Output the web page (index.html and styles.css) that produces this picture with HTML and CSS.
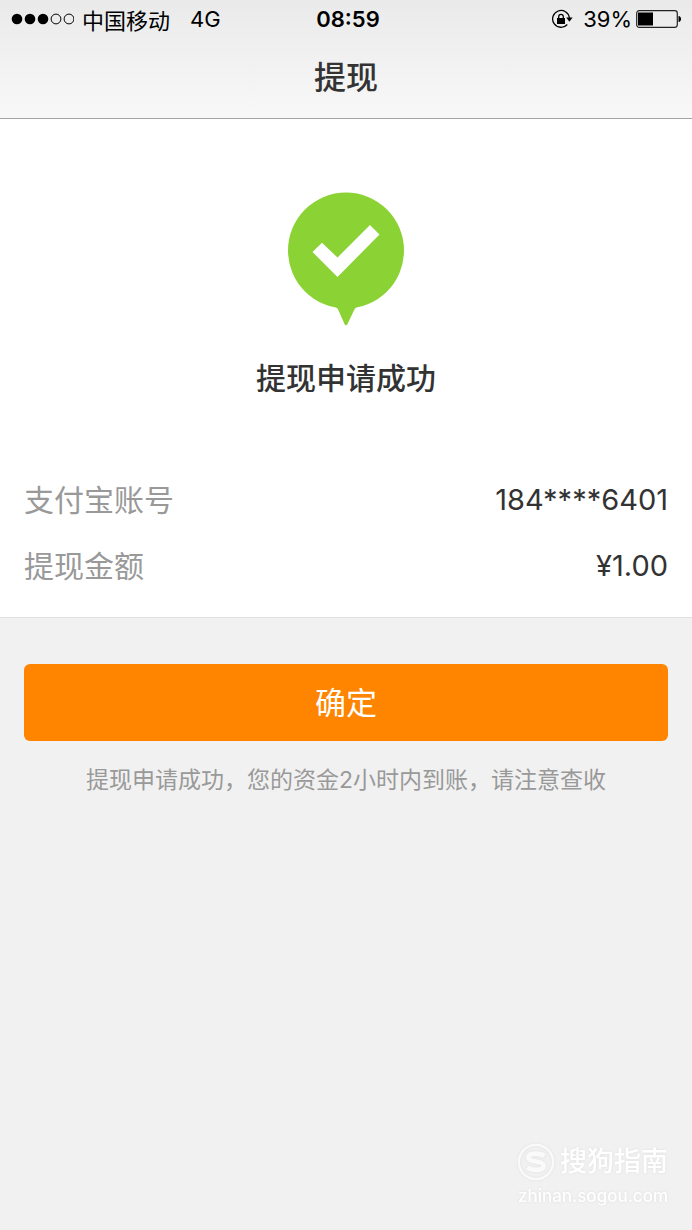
FILE: index.html
```html
<!DOCTYPE html>
<html lang="zh-CN">
<head>
  <meta charset="UTF-8" />
  <meta name="viewport" content="width=device-width, initial-scale=1" />
  <title>提现</title>
  <link rel="stylesheet" href="styles.css">
</head>
<body>
  <header>
    <div class="status-bar">
      <div class="carrier">
        <svg class="signal" width="64" height="12" viewBox="0 0 64 12">
          <circle cx="7" cy="6" r="5.300" />
          <circle cx="20" cy="6" r="5.300" />
          <circle cx="33" cy="6" r="5.300" />
          <circle class="off" cx="46" cy="6" r="4.900" />
          <circle class="off" cx="59" cy="6" r="4.900" />
        </svg>
        <span>中国移动</span>
        <span class="network">4G</span>
      </div>
      <time>08:59</time>
      <div class="battery">
        <svg width="22" height="20" viewBox="0 0 22 20">
          <path d="M16.300 15.500A8.400 8.400 0 1 1 18.400 9" fill="none" stroke="#000" stroke-width="1.300" />
          <path d="M15.200 8.400h6.400l-3.200 4.400z" />
          <path d="M6 9h8v6H6z" />
          <path d="M7.700 9.500V7.600a2.300 2.300 0 0 1 4.600 0v1.900" fill="none" stroke="#000" stroke-width="1.300" />
        </svg>
        <span>39%</span>
        <svg width="46" height="18" viewBox="0 0 46 18">
          <rect x=".7" y=".7" width="40.600" height="16.600" rx="2.500" fill="none" stroke="#222" stroke-width="1.200" />
          <path d="M2 2.500h15v13H2z" />
          <path d="M42.500 6c3.400 0 3.400 6 0 6z" />
        </svg>
      </div>
    </div>
    <h1>提现</h1>
  </header>

  <main>
    <section class="result">
      <svg class="success-icon" width="118" height="134" viewBox="0 0 118 134">
        <circle cx="59" cy="58.500" r="58" fill="#8bd234" />
        <path fill="#8bd234" d="M46 114c3 .8 4.300 2 5.200 3.800L57.500 132c.7 1.600 2.300 1.600 3 0l6.800-14.200c.9-1.800 2.200-3 5.200-3.800z" />
        <path fill="#fff" d="M25.500 60l9.500-9.300L50.500 65.500 83 33l9.500 9.500L50.500 85z" />
      </svg>
      <h2>提现申请成功</h2>
      <dl>
        <div class="row">
          <dt>支付宝账号</dt>
          <dd>184****6401</dd>
        </div>
        <div class="row">
          <dt>提现金额</dt>
          <dd>¥1.00</dd>
        </div>
      </dl>
    </section>

    <section class="actions">
      <button type="button">确定</button>
      <p>提现申请成功，您的资金2小时内到账，请注意查收</p>
    </section>
  </main>

  <footer>
    <div class="brand">
      <svg width="38" height="38" viewBox="0 0 40 40" fill="none" stroke="#fafafa">
        <circle cx="20" cy="20" r="18" stroke-width="2.500" />
        <path d="M29 13.500c-4-3-17-4-17 1.500 0 6 16 3 16 9 0 6-13 5-17 1.500" stroke-width="5" />
      </svg>
      <span>搜狗指南</span>
    </div>
    <div class="site">zhinan.sogou.com</div>
  </footer>
</body>
</html>
```

FILE: styles.css
```css
* {
  box-sizing: border-box;
  margin: 0;
  padding: 0;
}

body {
  display: flex;
  flex-direction: column;
  min-height: 100vh;
  background: #f1f1f1;
  color: #333;
  font-family: Inter, "Noto Sans CJK SC", sans-serif;
}

header {
  padding-bottom: 16px;
  background: linear-gradient(#eaeaea, #f8f8f8);
  border-bottom: 1px solid #a5a5a5;
}

.status-bar {
  display: grid;
  grid-template-columns: 1fr auto 1fr;
  align-items: center;
  height: 38px;
  padding: 0 10px;
  color: #000;
  font-size: 22px;
}

.carrier,
.battery {
  display: flex;
  align-items: center;
}

.carrier { gap: 8px }
.network { margin-left: 12px }
.off { fill: none; stroke: #000 }

time {
  padding-left: 4px;
  font-weight: 600;
}

.battery {
  justify-content: flex-end;
  gap: 4px;
}

.battery span { margin-left: 6px }

h1 {
  line-height: 48px;
  margin-top: 16px;
  font-size: 32px;
  font-weight: 500;
  text-align: center;
}

.result {
  padding: 73px 24px 18px;
  background: #fff;
  border-bottom: 1px solid #e0e0e0;
}

.success-icon {
  display: block;
  margin: 0 auto;
}

h2 {
  margin-top: 28px;
  line-height: 48px;
  font-size: 30px;
  font-weight: 500;
  text-align: center;
}

dl { margin-top: 65px }

.row {
  display: flex;
  justify-content: space-between;
  line-height: 66px;
  font-size: 30px;
}

dt { color: #999 }
dd { font-size: 29px }

.actions {
  padding: 46px 24px;
  text-align: center;
}

button {
  width: 100%;
  height: 77px;
  padding-bottom: 4px;
  border: 0;
  border-radius: 6px;
  background: #ff8400;
  color: #fff;
  font: inherit;
  font-size: 31px;
}

.actions p {
  margin-top: 22px;
  line-height: 34px;
  color: #999;
  font-size: 23px;
}

footer {
  align-self: flex-end;
  margin-top: auto;
  padding: 0 24px 20px;
  color: #fff;
  filter: drop-shadow(0 0 1px #ddd);
}

.brand {
  display: flex;
  align-items: center;
  gap: 5px;
  font-size: 27px;
  font-weight: 500;
  line-height: 40px;
}

.site {
  font-size: 17px;
  font-weight: 500;
  line-height: 28px;
  text-align: right;
}
```
